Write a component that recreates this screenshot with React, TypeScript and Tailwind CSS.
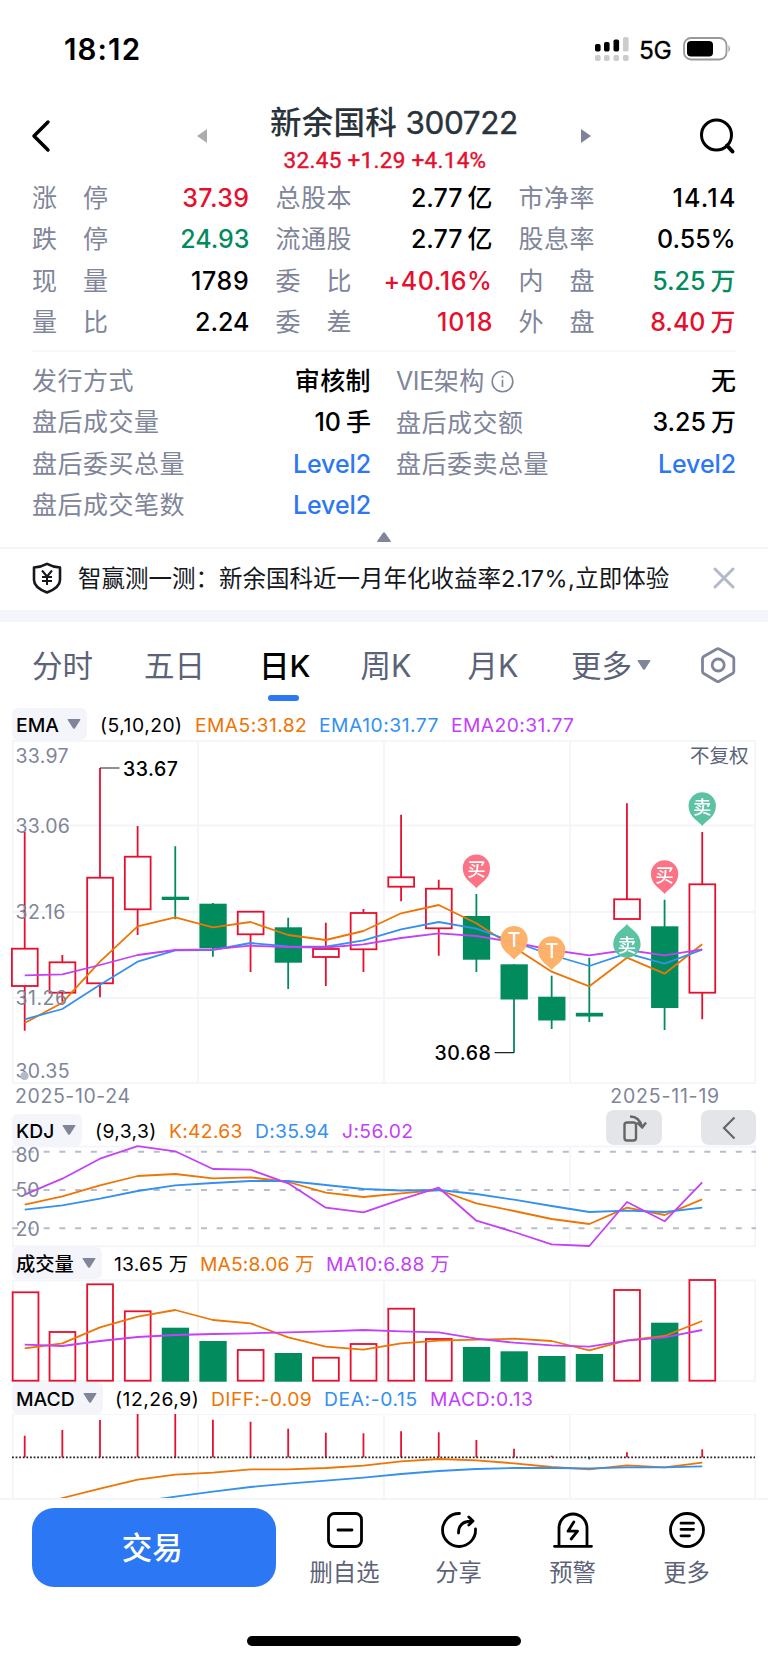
import React from "react";

const RED = "#e60f2d";
const GREEN = "#028b5d";
const ORANGE = "#ee7505";
const BLUE = "#3590ef";
const PURPLE = "#c341f7";
const GRID = "#f4f5fa";

interface Candle {
  up: boolean;
  high: number;
  top: number;
  bottom: number;
  low: number;
}

interface Metric {
  text: string;
  className: string;
}

const candles: Candle[] = [
  { up: true, high: 831.7, top: 948.7, bottom: 986, low: 1030.7 },
  { up: true, high: 955, top: 962.3, bottom: 992.7, low: 1001.7 },
  { up: true, high: 768, top: 877.7, bottom: 983.3, low: 997.3 },
  { up: true, high: 826, top: 856.7, bottom: 909.3, low: 935 },
  { up: false, high: 846.3, top: 896.7, bottom: 900, low: 919.3 },
  { up: false, high: 903, top: 903.7, bottom: 948.3, low: 956.7 },
  { up: true, high: 911.7, top: 911.7, bottom: 934.3, low: 972 },
  { up: false, high: 917.7, top: 927.3, bottom: 962.7, low: 989 },
  { up: true, high: 922.7, top: 949, bottom: 957, low: 986 },
  { up: true, high: 909, top: 913, bottom: 949.3, low: 972 },
  { up: true, high: 814.7, top: 877.3, bottom: 886.7, low: 901.3 },
  { up: true, high: 879.7, top: 888.7, bottom: 928.3, low: 955.7 },
  { up: false, high: 894, top: 916, bottom: 959.7, low: 972 },
  { up: false, high: 964.3, top: 964.3, bottom: 999.5, low: 1052.7 },
  { up: false, high: 975.7, top: 996.7, bottom: 1020.5, low: 1029 },
  { up: false, high: 957.7, top: 1012.8, bottom: 1016.5, low: 1022 },
  { up: true, high: 803.3, top: 899.3, bottom: 919, low: 919 },
  { up: false, high: 899.7, top: 926.3, bottom: 1008, low: 1030 },
  { up: true, high: 832, top: 884.3, bottom: 992.7, low: 1019.3 },
];

const ema5 = [1023, 1002.7, 961.7, 926.3, 917.3, 927.3, 922, 935, 940, 931, 913.3, 905, 923.3, 947.3, 971.7, 986.3, 957.7, 973.7, 944.3];
const ema10 = [1019.3, 1009, 984.7, 961.7, 950.3, 950, 943, 946.3, 946.7, 940.3, 929.3, 922, 928.7, 942, 955, 966, 953.3, 963.7, 949.7];
const ema20 = [975.3, 974.3, 965, 955, 950, 949.3, 945.7, 947, 947.5, 944.3, 938, 933.3, 936, 942.3, 950, 955.3, 950, 955.3, 949.3];

const kLine = [1204.7, 1196.3, 1185.3, 1176, 1174, 1178.3, 1177.3, 1182, 1192.7, 1197, 1193.3, 1190, 1203.3, 1211, 1219, 1224, 1207.7, 1215, 1199.3];
const dLine = [1209.7, 1205.3, 1198.7, 1191, 1185.3, 1183, 1181, 1181, 1185, 1189, 1190.5, 1190, 1194, 1199.7, 1206, 1212, 1210.7, 1212, 1207.7];
const jLine = [1194.7, 1178.7, 1158.7, 1146.2, 1151.3, 1169, 1169.7, 1183.3, 1207.7, 1212.3, 1199.3, 1187.7, 1220.7, 1232, 1244.3, 1246, 1202, 1221.3, 1182.3];

const volumeTops = [1292.3, 1332, 1284.3, 1311.3, 1327.7, 1341, 1350, 1353, 1357.7, 1344, 1308.7, 1339, 1347, 1351.3, 1356, 1354, 1290, 1322.7, 1280];
const volMa5 = [1348.3, 1343.3, 1327.3, 1316.7, 1310, 1320, 1323.3, 1337.3, 1346.7, 1349.7, 1343.3, 1340.7, 1339.7, 1338.7, 1341, 1350.3, 1340.3, 1336, 1321];
const volMa10 = [1344.7, 1346, 1341, 1337, 1335, 1334, 1333.3, 1332.3, 1331.3, 1330, 1331.3, 1332.3, 1338.7, 1342.7, 1345.3, 1346.7, 1340.7, 1337.3, 1330];

const macdEnds = [1435.7, 1430, 1420, 1412.7, 1413.3, 1419.7, 1421.7, 1428.7, 1432.7, 1433.3, 1431.3, 1432.3, 1440, 1448.7, 1455.7, 1459.5, 1452.3, 1456.5, 1449.3];
const diffLine = [1510, 1498, 1488.7, 1479.7, 1474.7, 1472.7, 1469.3, 1469.3, 1468, 1465.7, 1461.3, 1459, 1460.3, 1463.3, 1467, 1469.3, 1465.3, 1467.3, 1462.7];
const deaLine = [1520, 1512, 1508, 1502, 1496.7, 1491.7, 1487, 1483.7, 1480.7, 1477.7, 1474, 1471, 1469, 1468, 1468, 1468.3, 1467.3, 1467.3, 1466.3];

const xAt = (i: number) => 24.7 + i * 37.64;
const toPoints = (ys: number[]) => ys.map((y, i) => `${xAt(i)},${y}`).join(" ");

const Line = ({ ys, color }: { ys: number[]; color: string }) => (
  <polyline points={toPoints(ys)} fill="none" stroke={color} strokeWidth="1.8" strokeLinejoin="round" />
);

const Frame = ({ top, bottom }: { top: number; bottom: number }) => (
  <g stroke={GRID} strokeWidth="1.8" fill="none">
    <rect x="12.8" y={top} width="742.4" height={bottom - top} />
    <path d={`M198 ${top}V${bottom}M384 ${top}V${bottom}M570 ${top}V${bottom}`} />
  </g>
);

const Bar = ({ i, up, top, bottom }: { i: number; up: boolean; top: number; bottom: number }) =>
  up ? (
    <rect x={xAt(i) - 12.8} y={top} width="25.8" height={bottom - top} fill="none" stroke={RED} strokeWidth="1.8" />
  ) : (
    <rect x={xAt(i) - 13.5} y={top} width="27.3" height={bottom - top} fill={GREEN} />
  );

const Pin = ({ i, y, label, color, flip }: { i: number; y: number; label: string; color: string; flip?: boolean }) => (
  <g transform={`translate(${xAt(i)} ${y})`}>
    <path
      d="M0 20C-3 15.5-13.7 11-13.7 0A13.7 13.7 0 0 1 13.7 0C13.7 11 3 15.5 0 20Z"
      fill={color}
      transform={flip ? "rotate(180)" : undefined}
    />
    <text x="0" y="7.5" textAnchor="middle" fill="#fff" fontSize={label === "T" ? 20 : 18.5} fontWeight="500">
      {label}
    </text>
  </g>
);

const Triangle = () => (
  <svg width="14" height="10" viewBox="0 0 14 10" className="shrink-0">
    <path d="M1.2 0h11.6q1.2 0 .5 1L8 9.2q-1 1.2-2 0L.7 1Q0 0 1.2 0Z" fill="#80859a" />
  </svg>
);

function IndicatorRow({ name, chip, params, metrics }: { name: string; chip: string; params: Metric; metrics: Metric[] }) {
  return (
    <div className="flex h-8 items-center pl-3 text-[19.3px] leading-8 whitespace-nowrap">
      <div className={`flex h-8 items-center justify-between rounded-md bg-[#f4f5fa] pl-[4px] pr-[6px] font-medium ${chip}`}>
        <span className="pt-px">{name}</span>
        <Triangle />
      </div>
      <span className={`shrink-0 pt-px ${params.className}`}>{params.text}</span>
      {metrics.map((m) => (
        <span key={m.text} className={`shrink-0 pt-px ${m.className}`}>
          {m.text}
        </span>
      ))}
    </div>
  );
}

const quoteRows = [
  ["涨停", "37.39", "tracking-[0.4px] text-[#e60f2d]", "总股本", "2.77 亿", "", "市净率", "14.14", "tracking-[1.2px] -mr-px"],
  ["跌停", "24.93", "text-[#028b5d]", "流通股", "2.77 亿", "", "股息率", "0.55%", ""],
  ["现量", "1789", "tracking-[0.7px]", "委比", "+40.16%", "tracking-[0.6px] text-[#e60f2d]", "内盘", "5.25 万", "text-[#028b5d]"],
  ["量比", "2.24", "", "委差", "1018", "tracking-[1px] -mr-px text-[#e60f2d]", "外盘", "8.40 万", "text-[#e60f2d]"],
];

const detailRows = [
  ["发行方式", "审核制", "VIE架构", "无"],
  ["盘后成交量", "10 手", "盘后成交额", "3.25 万"],
  ["盘后委买总量", "Level2", "盘后委卖总量", "Level2"],
  ["盘后成交笔数", "Level2", "", ""],
];

const SpreadLabel = ({ text }: { text: string }) => (
  <span className="flex w-[76px] justify-between text-[#80859a]">
    {text.split("").map((c) => (
      <span key={c}>{c}</span>
    ))}
  </span>
);

// A value such as "5.25 万" keeps a narrow gap before its unit
const Value = ({ text, color }: { text: string; color: string }) => {
  const [num, unit] = text.split(" ");
  return (
    <span className={`font-medium ${color}`}>
      {num}
      {unit && <span className="ml-[5px]">{unit}</span>}
    </span>
  );
};

const tabs = [
  { label: "分时", className: "w-[112px]" },
  { label: "五日", className: "w-[115px]" },
  { label: "日K", className: "w-[101.5px]" },
  { label: "周K", className: "w-[107px]" },
  { label: "月K", className: "w-[103.5px]" },
];

const actions = [
  {
    label: "删自选",
    icon: (
      <>
        <rect x="3.5" y="2.5" width="33" height="33" rx="6" />
        <path d="M13 19h14" />
      </>
    ),
  },
  {
    label: "分享",
    icon: (
      <>
        <path d="M20.5 2.5A16.5 16.5 0 1 0 36.5 18" />
        <path d="M19.5 22c0-7.500 4.500-12 14-12M29.800 6l4.200 4-4.200 4" />
      </>
    ),
  },
  {
    label: "预警",
    icon: (
      <>
        <path d="M6 35V17a14 14 0 0 1 28 0v18M1.500 35.300h37" />
        <path d="M20.800 11l-5.800 9.200h9.500L18.200 28" />
      </>
    ),
  },
  {
    label: "更多",
    icon: (
      <>
        <circle cx="20" cy="19" r="16.500" />
        <path d="M14 12.200h12.500M14 18.300h12.500M14 24.800h8.500" />
      </>
    ),
  },
];

export default function App() {
  return (
    <div className="flex h-[1663px] w-[768px] flex-col overflow-hidden bg-white font-['Inter','Noto_Sans_CJK_SC',sans-serif] text-black">
      {/* Status bar */}
      <div className="flex h-[98px] shrink-0 items-center justify-between pl-[64px] pr-[36px]">
        <span className="text-[29.5px] font-semibold tracking-[1.1px]">18:12</span>
        <div className="flex items-center">
          <svg width="36" height="26" viewBox="0 0 36 26">
            <g fill="#000">
              <rect x="1" y="8" width="5.6" height="7.5" rx="1.8" />
              <rect x="10" y="6" width="5.6" height="9.500" rx="1.8" />
              <rect x="19.500" y="3.500" width="5.600" height="12" rx="1.8" />
            </g>
            <g fill="#ccc">
              <rect x="29" y="1" width="5.6" height="14.500" rx="1.8" />
              <rect x="1" y="19" width="5.6" height="6" rx="1.8" />
              <rect x="10" y="19" width="5.6" height="6" rx="1.8" />
              <rect x="19.500" y="19" width="5.6" height="6" rx="1.8" />
              <rect x="29" y="19" width="5.6" height="6" rx="1.8" />
            </g>
          </svg>
          <span className="ml-[9px] w-[34px] pt-[2px] text-[24.5px] tracking-[-0.4px] [-webkit-text-stroke:0.3px_#000]">5G</span>
          <svg width="50" height="26" viewBox="0 0 50 26" className="ml-[9px]">
            <rect x="2" y="2" width="42.500" height="21.500" rx="7" fill="none" stroke="#999" strokeWidth="1.8" />
            <rect x="5" y="5" width="26" height="15.500" rx="4" fill="#000" />
            <path d="M46.500 9q2.800 3.700 0 7.500Z" fill="#999" />
          </svg>
        </div>
      </div>

      {/* Title with prev / next stock */}
      <header className="flex h-[76px] shrink-0 items-center pl-[30px] pr-[32px]">
        <svg width="22" height="34" viewBox="0 0 22 34" fill="none" stroke="#000" strokeWidth="3.500" strokeLinecap="round" strokeLinejoin="round">
          <path d="M18 3L4 17l14 14" />
        </svg>
        <svg width="10" height="14" viewBox="0 0 10 14" className="ml-[145px]">
          <path d="M10 0v14L0 7Z" fill="#adadad" />
        </svg>
        <div className="flex flex-1 flex-col items-center pt-[4px] whitespace-nowrap">
          <h1 className="text-[31.5px] leading-[44px] font-medium tracking-[0.2px] text-[#2a333a]">
            新余国科 <span className="font-normal tracking-[-0.4px] [-webkit-text-stroke:0.4px_#2a333a]">300722</span>
          </h1>
          <p className="mr-[18px] font-['Roboto',sans-serif] text-[22.5px] leading-[31px] tracking-[0.3px] text-[#e60f2d] [-webkit-text-stroke:0.4px_#e60f2d]">32.45 +1.29 +4.14%</p>
        </div>
        <svg width="10" height="14" viewBox="0 0 10 14" className="mr-[107px]">
          <path d="M0 0v14l10-7Z" fill="#80829a" />
        </svg>
        <svg width="38" height="38" viewBox="0 0 38 38" fill="none" stroke="#000" strokeWidth="3">
          <circle cx="18.500" cy="18" r="15" />
          <path d="M29 28.500l5.500 6" strokeWidth="4" strokeLinecap="round" />
        </svg>
      </header>

      {/* Quote figures */}
      <section className="mx-8 mt-[4px] shrink-0 text-[25px] leading-[41px]">
        {quoteRows.map((r) => (
          <div key={r[0]} className="flex h-[41.3px]">
            <div className="flex w-[217.5px] justify-between">
              <SpreadLabel text={r[0]} />
              <Value text={r[1]} color={r[2]} />
            </div>
            <div className="ml-[26px] flex w-[217px] justify-between">
              <SpreadLabel text={r[3]} />
              <Value text={r[4]} color={r[5]} />
            </div>
            <div className="ml-[26px] flex w-[217px] justify-between">
              <SpreadLabel text={r[6]} />
              <Value text={r[7]} color={r[8]} />
            </div>
          </div>
        ))}
      </section>
      <div className="mx-8 mt-[7px] h-0.5 shrink-0 bg-[#f8f9fb]" />
      <section className="mx-8 mt-[9px] shrink-0 text-[25px] leading-[41px]">
        {detailRows.map((r) => (
          <div key={r[0]} className="flex h-[41.3px] justify-between">
            <div className="flex w-[339px] justify-between">
              <span className="tracking-[0.5px] text-[#80859a]">{r[0]}</span>
              <Value text={r[1]} color={r[1] === "Level2" ? "text-[#2c77f3] tracking-[-0.1px]" : r[1] === "审核制" ? "tracking-[0.4px]" : ""} />
            </div>
            <div className="flex w-[340px] justify-between">
              <span className="flex items-center tracking-[0.5px] text-[#80859a]">
                {r[2] === "VIE架构" ? (
                  <>
                    <span className="tracking-[-0.4px]">VIE</span>架构
                    <svg width="23" height="23" viewBox="0 0 23 23" className="ml-[6px]" fill="none" stroke="#80859a" strokeWidth="1.600">
                      <circle cx="11.500" cy="11.500" r="10.300" />
                      <path d="M11.500 9.800v7.200M11.500 5.800v2" />
                    </svg>
                  </>
                ) : (
                  r[2]
                )}
              </span>
              <Value text={r[3]} color={r[3] === "Level2" ? "text-[#2c77f3] tracking-[-0.1px]" : ""} />
            </div>
          </div>
        ))}
      </section>
      <div className="flex h-[21px] shrink-0 items-center justify-center">
        <svg width="14" height="10" viewBox="0 0 14 10">
          <path d="M1 10h12q1.500 0 .6-1.200L8 .8q-1-1-2 0L.4 8.800Q-.5 10 1 10Z" fill="#80859a" />
        </svg>
      </div>

      {/* Promo notice */}
      <div className="flex h-[63px] shrink-0 items-center border-t-2 border-[#f4f5fa] pb-[3px] pl-8 pr-[33px]">
        <svg width="30" height="32" viewBox="0 0 30 32" fill="none" stroke="#15171c" strokeWidth="2.600" strokeLinejoin="round">
          <path d="M15 1.800Q21 5 28 5.500V18q0 7.500-13 12.500Q2 25.500 2 18V5.500Q9 5 15 1.800Z" />
          <path d="M10 8.500l5 6 5-6M15 14.500V23M10 15h10M10 19h10" strokeWidth="2" />
        </svg>
        <span className="ml-4 flex-1 text-[23.5px] whitespace-nowrap text-[#15171c]">
          智赢测一测：新余国科近一月年化收益率<span className="tracking-[0.4px]">2.17%,</span>立即体验
        </span>
        <svg width="22" height="22" viewBox="0 0 22 22" stroke="#b4b9c8" strokeWidth="3" strokeLinecap="round">
          <path d="M2 2l18 18M20 2L2 20" />
        </svg>
      </div>
      <div className="h-3 shrink-0 bg-[#f4f5fa]" />

      {/* Period tabs */}
      <nav className="flex h-[86px] shrink-0 items-center pl-8 text-[30.5px] whitespace-nowrap text-[#5c6378]">
        {tabs.map((t) =>
          t.label === "日K" ? (
            <span key={t.label} className={`relative font-medium text-black ${t.className}`}>
              {t.label}
              <i className="absolute -bottom-[13px] left-[9px] h-[6px] w-[31px] rounded-full bg-[#2c77f3]" />
            </span>
          ) : (
            <span key={t.label} className={t.className}>
              {t.label}
            </span>
          )
        )}
        <span className="flex w-[130px] items-center gap-[5px]">
          更多
          <Triangle />
        </span>
        <svg width="36" height="38" viewBox="0 0 36 38" fill="none" stroke="#80859a" strokeWidth="2.800" strokeLinejoin="round">
          <path d="M15.800 3q1.200-.7 2.400 0L31.500 10.500q1.300.8 1.300 2V25.500q0 1.200-1.300 2L18.200 35.300q-1.200.7-2.400 0L2.700 27.500q-1.200-.8-1.200-2V12.500q0-1.200 1.200-2Z" />
          <circle cx="17.200" cy="19" r="6" />
        </svg>
      </nav>

      {/* Price chart */}
      <IndicatorRow
        name="EMA"
        chip="w-[75px]"
        params={{ text: "(5,10,20)", className: "ml-[13px] w-[95px] tracking-[0.5px]" }}
        metrics={[
          { text: "EMA5:31.82", className: "w-[124px] text-[#ee7505] tracking-[0.4px]" },
          { text: "EMA10:31.77", className: "w-[132px] text-[#3590ef] tracking-[0.5px]" },
          { text: "EMA20:31.77", className: "text-[#c341f7] tracking-[0.4px]" },
        ]}
      />
      <svg width="768" height="345" viewBox="0 740 768 345" className="shrink-0">
        <Frame top={741} bottom={1083} />
        <path d="M13 825.500H755M13 912H755M13 998H755" stroke={GRID} strokeWidth="1.800" />
        {candles.map((c, i) => (
          <g key={i}>
            <path
              d={`M${xAt(i)} ${c.high}V${c.top}M${xAt(i)} ${c.bottom}V${c.low}${c.up ? "" : `M${xAt(i)} ${c.top}V${c.bottom}`}`}
              stroke={c.up ? RED : GREEN}
              strokeWidth="1.800"
            />
            <Bar i={i} up={c.up} top={c.top} bottom={c.bottom} />
          </g>
        ))}
        <Line ys={ema5} color={ORANGE} />
        <Line ys={ema10} color={BLUE} />
        <Line ys={ema20} color={PURPLE} />
        <g fontSize="19.5" fill="#80859a" letterSpacing="0.3">
          <text x="15.500" y="763">33.97</text>
          <text x="15.500" y="833">33.06</text>
          <text x="15.500" y="919" letterSpacing="0.5">32.16</text>
          <text x="15.500" y="1005" letterSpacing="0.5">31.26</text>
          <text x="15.500" y="1077.500">30.35</text>
        </g>
        <circle cx="24.500" cy="1076" r="4" fill="#b4b9c8" />
        <text x="748.500" y="763" textAnchor="end" fontSize="19.500" fill="#5c6378">不复权</text>
        <path d="M100 768h19.500M494.500 1052.700h19.500" stroke="#222" strokeWidth="1.200" />
        <g fontSize="19.500" fontWeight="500" letterSpacing="0.5">
          <text x="123" y="775.500">33.67</text>
          <text x="434.500" y="1060">30.68</text>
        </g>
        <g opacity="0.97">
          <Pin i={12} y={868.3} label="买" color="#fc6f83" />
          <Pin i={13} y={939.8} label="T" color="#fdb068" />
          <Pin i={14} y={950} label="T" color="#fdb068" />
          <Pin i={16} y={944} label="卖" color="#56c1a0" flip />
          <Pin i={17} y={874} label="买" color="#fc6f83" />
          <Pin i={18} y={806} label="卖" color="#56c1a0" />
        </g>
      </svg>
      <div className="flex h-[29px] shrink-0 justify-between pl-[15px] pr-[48px] text-[19.5px] leading-[23px] text-[#80859a]">
        <span className="tracking-[0.6px]">2025-10-24</span>
        <span className="tracking-[0.8px]">2025-11-19</span>
      </div>

      {/* KDJ */}
      <div className="flex h-8 shrink-0 items-center justify-between pr-3">
        <IndicatorRow
          name="KDJ"
          chip="w-[70px]"
          params={{ text: "(9,3,3)", className: "ml-[13px] w-[74px] tracking-[0.4px]" }}
          metrics={[
            { text: "K:42.63", className: "w-[86px] text-[#ee7505] tracking-[0.3px]" },
            { text: "D:35.94", className: "w-[86px] text-[#3590ef] tracking-[0.3px]" },
            { text: "J:56.02", className: "pl-px text-[#c341f7] tracking-[0.4px]" },
          ]}
        />
        <div className="-mt-[5px] flex gap-[39px]">
          <div className="flex h-[35px] w-[56px] items-center justify-center rounded-lg bg-[#e4e5e9]">
            <svg width="26" height="28" viewBox="0 0 26 28" fill="none" stroke="#666" strokeWidth="2.400">
              <rect x="3.500" y="8.500" width="11.500" height="18" rx="2.500" />
              <path d="M9 2.500q9.500 0 12 10.500M16 8.500l5.200 5L25 8.500" />
            </svg>
          </div>
          <div className="flex h-[35px] w-[55px] items-center justify-center rounded-lg bg-[#e4e5e9]">
            <svg width="14" height="24" viewBox="0 0 14 24" fill="none" stroke="#666" strokeWidth="2.200">
              <path d="M12.500 1.500L2 12l10.500 10.500" />
            </svg>
          </div>
        </div>
      </div>
      <svg width="768" height="101" viewBox="0 1146 768 101" className="shrink-0 overflow-visible">
        <Frame top={1146.5} bottom={1246.3} />
        <path d="M12.200 1151.700H756M12.200 1190H756M12.200 1228.300H756" stroke="#b9bdcb" strokeWidth="2" strokeDasharray="6 9.730" />
        <Line ys={kLine} color={ORANGE} />
        <Line ys={dLine} color={BLUE} />
        <Line ys={jLine} color={PURPLE} />
        <g fontSize="19.500" fill="#80859a">
          <text x="15.500" y="1162">80</text>
          <text x="15.500" y="1197">50</text>
          <text x="15.500" y="1235.500">20</text>
        </g>
      </svg>

      {/* Volume */}
      <IndicatorRow
        name="成交量"
        chip="w-[90px]"
        params={{ text: "13.65 万", className: "ml-[12px] w-[86px] tracking-[0.2px]" }}
        metrics={[
          { text: "MA5:8.06 万", className: "w-[126px] text-[#ee7505] tracking-[0.1px]" },
          { text: "MA10:6.88 万", className: "text-[#c341f7] tracking-[0.3px]" },
        ]}
      />
      <svg width="768" height="103" viewBox="0 1279 768 103" className="shrink-0">
        <Frame top={1280.3} bottom={1381} />
        {volumeTops.map((top, i) => (
          <Bar key={i} i={i === 0 ? 0.02 : i} up={candles[i].up} top={top} bottom={candles[i].up ? 1380.7 : 1381.7} />
        ))}
        <Line ys={volMa5} color={ORANGE} />
        <Line ys={volMa10} color={PURPLE} />
      </svg>

      {/* MACD, cut off by the bottom bar */}
      <IndicatorRow
        name="MACD"
        chip="w-[91px]"
        params={{ text: "(12,26,9)", className: "ml-[12px] w-[96px] tracking-[0.5px]" }}
        metrics={[
          { text: "DIFF:-0.09", className: "w-[113px] text-[#ee7505] tracking-[0.4px]" },
          { text: "DEA:-0.15", className: "w-[106px] text-[#3590ef] tracking-[0.6px]" },
          { text: "MACD:0.13", className: "text-[#c341f7] tracking-[0.5px]" },
        ]}
      />
      <svg width="768" height="84" viewBox="0 1414 768 84" className="shrink-0">
        <Frame top={1414} bottom={1520} />
        {macdEnds.map((y, i) => (
          <path key={i} d={`M${xAt(i)} 1457.300V${y}`} stroke={y > 1457.3 ? GREEN : RED} strokeWidth="1.800" />
        ))}
        <path d="M12 1457.300H755" stroke="#222" strokeWidth="1.800" strokeDasharray="1.800 1.800" />
        <Line ys={diffLine} color={ORANGE} />
        <Line ys={deaLine} color={BLUE} />
      </svg>

      {/* Bottom actions */}
      <footer className="flex h-[165px] shrink-0 flex-col border-t-2 border-[#f4f5fa]">
        <div className="flex pt-[8px] pl-8">
          <button className="h-[79px] w-[243.5px] rounded-[22px] bg-[#2c77f3] pr-[3px] text-[30.5px] font-medium text-white">交易</button>
          <div className="ml-[12px] flex">
            {actions.map((a) => (
              <div key={a.label} className="flex w-[114px] flex-col items-center pt-[3px]">
                <svg width="40" height="38" viewBox="0 0 40 38" fill="none" stroke="#000" strokeWidth="2.800" strokeLinecap="round" strokeLinejoin="round">
                  {a.icon}
                </svg>
                <span className="mt-[7px] text-[23.3px] leading-[34px] text-[#5c6378]">{a.label}</span>
              </div>
            ))}
          </div>
        </div>
        <div className="mx-auto mt-[46px] h-[10px] w-[274px] rounded-full bg-black" />
      </footer>
    </div>
  );
}
